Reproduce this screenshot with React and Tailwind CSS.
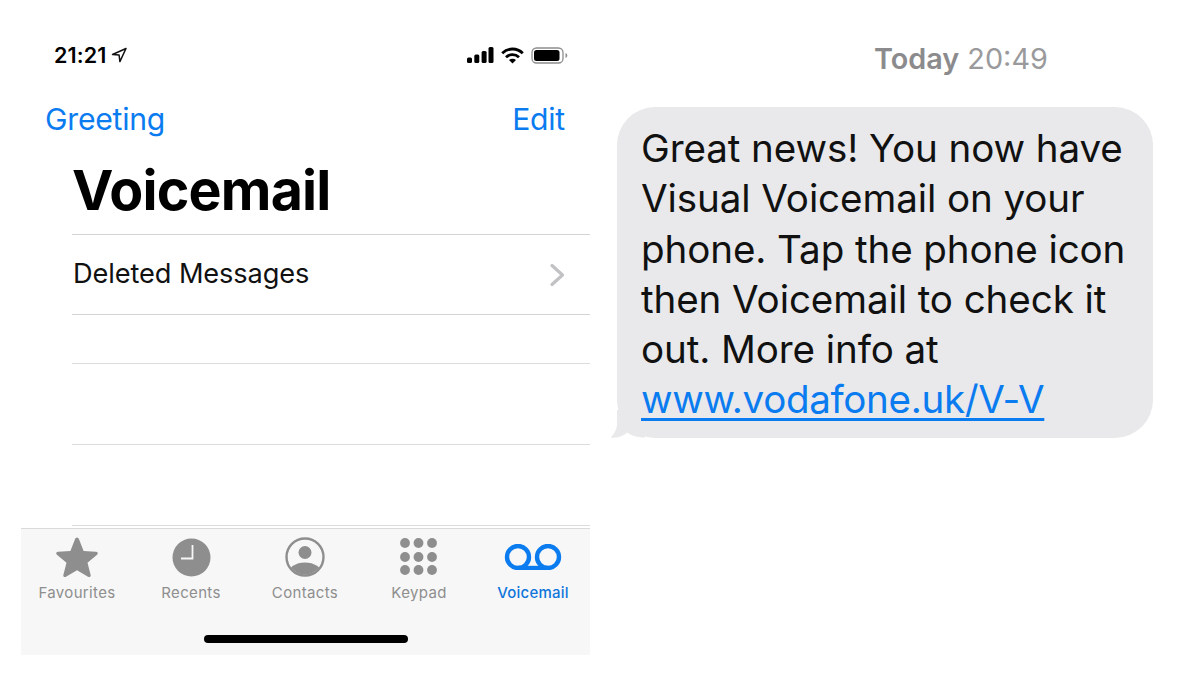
import React from "react";

const Star = () => (
  <svg width="44" height="42" viewBox="0 0 44 42"><path d="M22 1.500c1 0 1.600.7 2 1.800l4.600 11.600 12.300.8c1.900.1 2.600 1.900 1.200 3.100l-9.600 7.900 3.100 12c.5 1.800-1.100 3-2.600 2L22 34.200 11 40.700c-1.500 1-3.100-.2-2.600-2l3.100-12-9.600-7.900c-1.400-1.200-.7-3 1.200-3.100l12.300-.8L20 3.300c.4-1.100 1-1.800 2-1.800z" fill="#8e8e8e"/></svg>
);
const Clock = () => (
  <svg width="39" height="39" viewBox="0 0 39 39"><circle cx="19.500" cy="19.500" r="19" fill="#8e8e8e"/><path d="M20.500 7v13.500H9" fill="none" stroke="#f7f7f7" strokeWidth="1.800"/></svg>
);
const Contact = () => (
  <svg width="40" height="40" viewBox="0 0 40 40"><defs><clipPath id="cc"><circle cx="20" cy="20" r="17.500"/></clipPath></defs><circle cx="20" cy="20" r="18.500" fill="none" stroke="#8e8e8e" strokeWidth="2.400"/><circle cx="20" cy="15.500" r="6.500" fill="#8e8e8e"/><ellipse cx="20" cy="37" rx="17" ry="11.500" fill="#8e8e8e" clipPath="url(#cc)"/></svg>
);
const Keypad = () => (
  <svg width="38" height="38" viewBox="0 0 38 38" fill="#8e8e8e">
    {[5, 19, 32].flatMap((y) => [5, 18.5, 32].map((x) => <circle key={`${x}-${y}`} cx={x} cy={y} r="4.900" />))}
  </svg>
);
const VoicemailIcon = () => (
  <svg width="58" height="26" viewBox="0 0 58 26" fill="none" stroke="#0b7cf0" strokeWidth="4.400"><circle cx="14" cy="13" r="11"/><circle cx="44" cy="13" r="11"/><path d="M14 24h30"/></svg>
);

function Tab({ icon, label, active }) {
  return (
    <div className="flex flex-col items-center">
      <div className="h-[46px] flex items-center justify-center">{icon}</div>
      <span className={active ? "text-[15px] leading-[20px] mt-[3px] font-medium text-[#0f76db] tracking-[0.2px]" : "text-[15px] leading-[20px] mt-[3px] text-[#8e8e8e] tracking-[0.35px]"}>{label}</span>
    </div>
  );
}

export default function App() {
  return (
    <div className="w-[1200px] h-[675px] bg-white overflow-hidden flex font-['Inter','Liberation_Sans',sans-serif] text-black">
      <section className="w-[569px] h-[635px] ml-[21px] mt-[20px] flex flex-col">
        <div className="flex-1 flex flex-col">
          <div className="h-[78px] pt-[22px] flex justify-between pl-[33px] pr-[22px]">
            <div className="flex items-center h-[26px] gap-[5px]">
              <span className="text-[21.5px] font-semibold leading-[26px] tracking-[0.1px]">21:21</span>
              <svg width="16" height="16" viewBox="0 0 16 16" fill="none" stroke="#111" strokeWidth="1.500" strokeLinejoin="round"><path d="M15 1.500 1.500 7.500l6.600.6.8 6.500z"/></svg>
            </div>
            <div className="flex items-center h-[26px] gap-[7px]">
              <svg width="27" height="16" viewBox="0 0 27 16" fill="#000"><rect x="0" y="10.500" width="5" height="5.500" rx="1.500"/><rect x="7.300" y="7.500" width="5" height="8.500" rx="1.500"/><rect x="14.600" y="4" width="5" height="12" rx="1.500"/><rect x="21.500" y="0" width="5" height="16" rx="1.500"/></svg>
              <svg width="23" height="17" viewBox="0 0 23 17" fill="none" stroke="#000" strokeWidth="2.800"><path d="M1.200 6.200C7 .6 16 .6 21.800 6.200"/><path d="M5 10.200c3.600-3.400 9.400-3.400 13 0"/><path d="M11.500 16.500 8 13c2-1.800 5-1.800 7 0z" fill="#000" stroke="none"/></svg>
              <svg width="37" height="17" viewBox="0 0 37 17"><rect x="1" y="1" width="31" height="15" rx="4.500" fill="none" stroke="#8d8d8d" strokeWidth="1.300"/><rect x="3" y="3" width="25.500" height="11" rx="2.500" fill="#000"/><path d="M34.500 6v5c1.200-.4 1.800-1.400 1.800-2.500S35.700 6.400 34.500 6z" fill="#8d8d8d"/></svg>
            </div>
          </div>
          <div className="flex justify-between pl-[24px] pr-[25px] h-[45px] items-center -mt-[1px] text-[#0b7cf0] text-[30.2px] tracking-[-0.25px]">
            <span>Greeting</span>
            <span>Edit</span>
          </div>
          <h1 className="pl-[51px] mt-[18px] text-[55.500px] leading-[60px] font-bold tracking-[-0.8px] h-[74px]">Voicemail</h1>
          <div className="ml-[51px] flex flex-col">
            <div className="h-[81px] border-y border-[#d4d4d4] flex items-center justify-between pr-[25px] pl-[1px] text-[27.2px] tracking-[-0.1px] text-[#111]">
              <span>Deleted Messages</span>
              <svg width="16" height="24" viewBox="0 0 16 24" fill="none" stroke="#c2c2c4" strokeWidth="3.200" strokeLinecap="round" strokeLinejoin="round"><path d="M3 2.500 13.500 12 3 21.500"/></svg>
            </div>
            <div className="h-[48px]" />
            <div className="h-[81px] border-t border-[#dcdcdc]" />
            <div className="h-[81px] border-t border-[#dcdcdc]" />
            <div className="border-t border-[#dcdcdc]" />
          </div>
        </div>
        <div className="h-[127px] shrink-0 bg-[#f7f7f7] border-t border-[#dadada] relative">
          <div className="grid grid-cols-5 -ml-[1px] w-[570px] pt-[5px]">
            <Tab icon={<Star />} label="Favourites" />
            <Tab icon={<Clock />} label="Recents" />
            <Tab icon={<Contact />} label="Contacts" />
            <Tab icon={<Keypad />} label="Keypad" />
            <Tab icon={<VoicemailIcon />} label="Voicemail" active />
          </div>
          <div className="absolute left-[183px] top-[106px] w-[204px] h-[8px] rounded-full bg-black" />
        </div>
      </section>
      <section className="ml-[27px] mt-[40px] w-[536px] flex flex-col">
        <div className="h-[47px] pl-[257px] text-[28.8px] leading-[38px] text-[#8b8b8d] whitespace-nowrap">
          <span className="font-semibold">Today</span><span className="text-[#9a9a9c]"> 20:49</span>
        </div>
        <div className="relative mt-[20px] w-[536px] h-[331px] bg-[#e9e9eb] rounded-[38px] pl-[24px] pt-[16px] text-[38.600px] leading-[50.300px] tracking-[-0.1px] text-[#111] whitespace-nowrap">
          <svg className="absolute left-[-8px] bottom-0" width="36" height="28" viewBox="0 0 36 28" fill="#e9e9eb"><path d="M8 0v14c0 5-3 10-5.500 12.500-.6.7-.2 1.300.7 1.300 6 0 11-1.800 15.300-5.300 3 2.500 8 5 17.500 5V0z"/></svg>
          <div>Great news! You now have</div>
          <div>Visual Voicemail on your</div>
          <div>phone. Tap the phone icon</div>
          <div>then Voicemail to check it</div>
          <div>out. More info at</div>
          <div className="relative text-[#0b7cf0] tracking-[-0.35px] underline underline-offset-[5px] decoration-[3px]">www.vodafone.uk/V-V</div>
        </div>
      </section>
    </div>
  );
}
